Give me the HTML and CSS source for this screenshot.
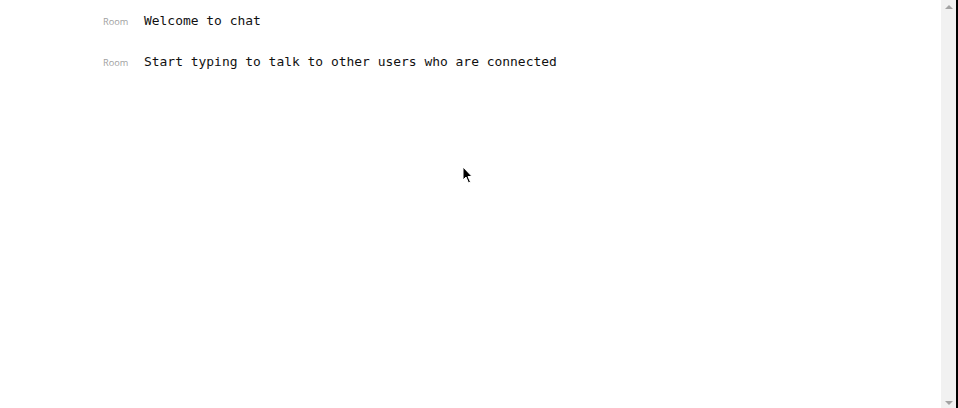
FILE: index.html
```html
<!DOCTYPE html>
<html>
<head>
<meta charset="utf-8">
<link rel="stylesheet" href="styles.css">
</head>
<body>
<div class="page">
  <div class="chat">
    <div class="msg"><span class="who">Room</span><span class="text">Welcome to chat</span></div>
    <div class="msg"><span class="who">Room</span><span class="text">Start typing to talk to other users who are connected</span></div>
    <svg class="cursor" width="12" height="19" viewBox="0 0 12 19"><path d="M1 1 L1 14 L4 11 L6.5 17 L8.5 16 L6 10.5 L10 10.5 Z" fill="#000" stroke="#fff" stroke-width="1"/></svg>
  </div>
  <div class="scrollbar">
    <div class="arrow up"></div>
    <div class="arrow down"></div>
  </div>
  <div class="edge"></div>
</div>
</body>
</html>
```
FILE: styles.css
```css
html, body { margin: 0; padding: 0; height: 100%; overflow: hidden; background: #fff; }
.page { display: flex; height: 408px; }
.chat { flex: 1; position: relative; padding-top: 13px; }
.msg { display: flex; align-items: baseline; padding-left: 103px; height: 41px; }
.who { width: 41px; font-family: "Open Sans", sans-serif; font-size: 9.2px; color: #a0a0a0; }
.text { font-family: "DejaVu Sans Mono", monospace; font-size: 12.95px; color: #111; }
.cursor { position: absolute; left: 462px; top: 166px; }
.scrollbar { width: 15px; background: #f1f1f1; display: flex; flex-direction: column; justify-content: space-between; align-items: center; padding: 5px 0 3px; box-sizing: border-box; }
.arrow { width: 0; height: 0; border-left: 4px solid transparent; border-right: 4px solid transparent; }
.arrow.up { border-bottom: 4px solid #a3a3a3; }
.arrow.down { border-top: 4px solid #a3a3a3; }
.edge { width: 2px; background: #000; }
```
